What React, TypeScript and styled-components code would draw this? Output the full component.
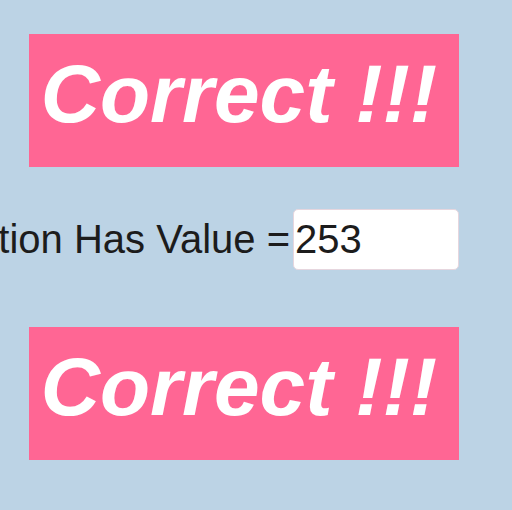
import React from "react";
import styled, { createGlobalStyle } from "styled-components";

const GlobalStyle = createGlobalStyle`
  html, body {
    margin: 0;
    padding: 0;
    background: #bcd3e5;
    overflow: hidden;
  }
  body {
    font-family: "Liberation Sans", Arial, sans-serif;
  }
`;

const Page = styled.div`
  width: 512px;
  height: 510px;
  display: flex;
  flex-direction: column;
  padding: 34px 0 0 29px;
  box-sizing: border-box;
`;

const Banner = styled.div`
  width: 430px;
  height: 133px;
  background: #ff6694;
  color: #ffffff;
  display: flex;
  align-items: center;
  justify-content: center;
  padding: 0 10px 14px 0;
  box-sizing: border-box;
  font-size: 82px;
  font-weight: bold;
  font-style: italic;
  white-space: nowrap;
`;

const ValueRow = styled.div`
  width: 430px;
  height: 61px;
  margin: 42px 0 57px;
  display: flex;
  align-items: center;
  justify-content: flex-end;
  gap: 3px;
`;

const Label = styled.span`
  flex-shrink: 0;
  white-space: nowrap;
  font-size: 40px;
  color: #1c1c1c;
`;

const ValueInput = styled.input`
  flex-shrink: 0;
  width: 166px;
  height: 61px;
  box-sizing: border-box;
  padding: 0 1px;
  border: 1px solid #e6d6de;
  border-radius: 5px;
  background: #ffffff;
  font-family: "Liberation Sans", Arial, sans-serif;
  font-size: 40px;
  color: #1c1c1c;
  outline: none;
`;

const App = () => {
  return (
    <>
      <GlobalStyle />
      <Page>
        <Banner>Correct !!!</Banner>
        <ValueRow>
          <Label>Function Has Value =</Label>
          <ValueInput type="text" defaultValue="253" />
        </ValueRow>
        <Banner>Correct !!!</Banner>
      </Page>
    </>
  );
};

export default App;
